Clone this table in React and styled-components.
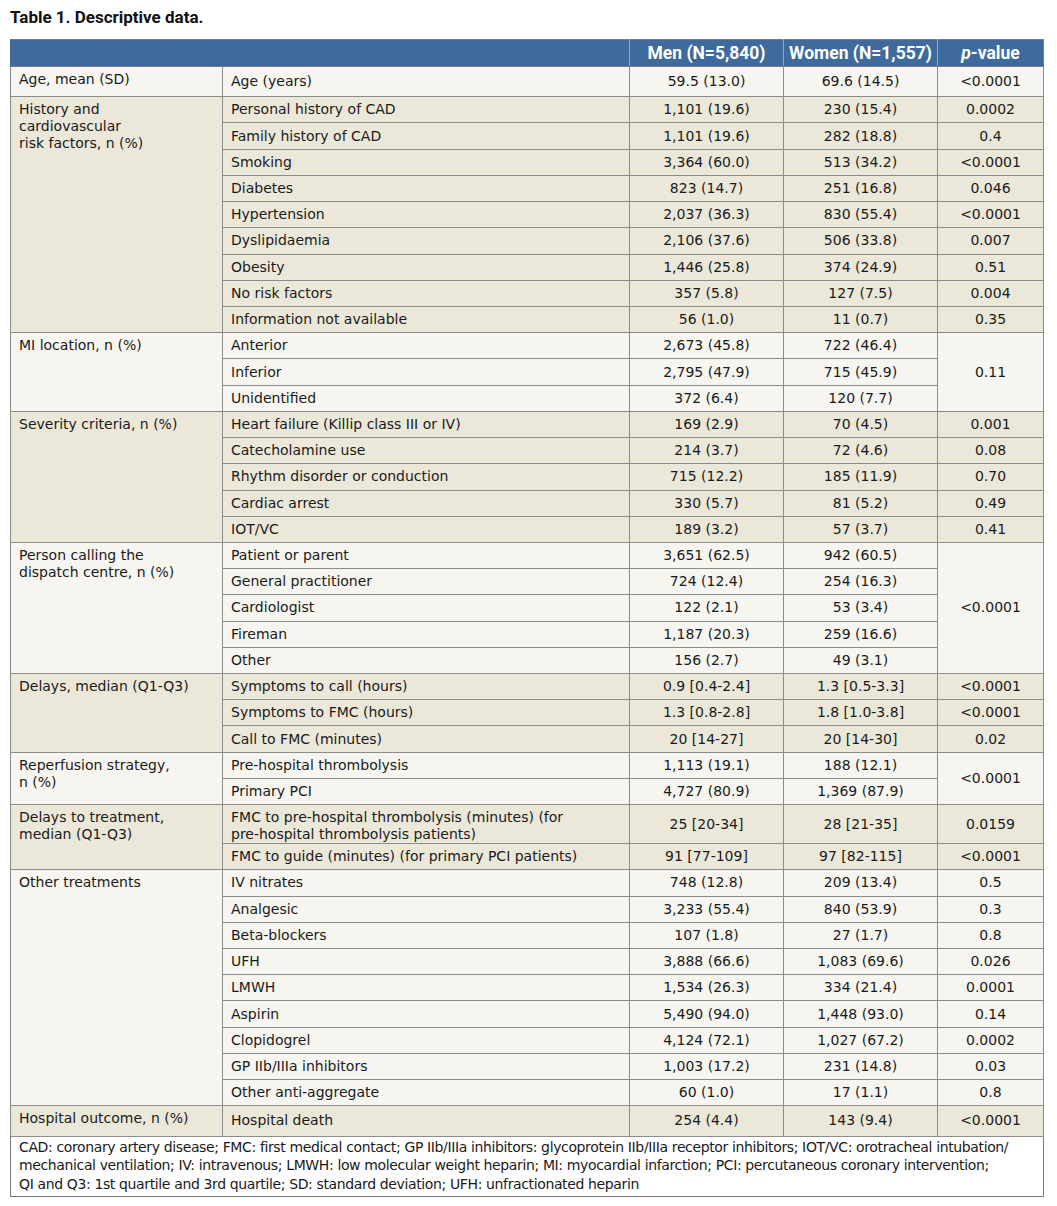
import React from 'react';
import styled, { createGlobalStyle } from 'styled-components';

const GlobalStyle = createGlobalStyle`
  body {
    margin: 0;
    background: #ffffff;
    font-family: "DejaVu Sans", "Liberation Sans", sans-serif;
    color: #1a1a1a;
  }
`;

const Page = styled.div`
  padding: 6px 14px 0 10px;
`;

const Title = styled.h1`
  margin: 0 0 10px 0;
  font-family: Roboto, "Liberation Sans", sans-serif;
  font-weight: bold;
  font-size: 17px;
  line-height: 23px;
  color: #111;
`;

const Table = styled.table`
  width: 1033px;
  border-collapse: collapse;
  table-layout: fixed;
  border: 1px solid #7a7a7a;
  font-size: 14px;
`;

const HeadCell = styled.th`
  background: #3e6b9c;
  color: #ffffff;
  height: 26px;
  padding: 0 2px;
  font-family: Roboto, "Liberation Sans", sans-serif;
  font-size: 17.5px;
  font-weight: bold;
  text-align: center;
  white-space: nowrap;
  border-left: 1px solid ${(p) => (p.$first ? '#3e6b9c' : '#8eabcb')};
  border-bottom: 1px solid #7a7a7a;
`;

const Row = styled.tr`
  background: ${(p) => (p.$dark ? '#ebe8d9' : '#f6f5ef')};
`;

const Cell = styled.td`
  border: 1px solid #8c8c8c;
  height: 25.22px;
  padding: 0 8px;
  line-height: 17px;
  text-align: ${(p) => (p.$center ? 'center' : 'left')};
  vertical-align: ${(p) => (p.$top ? 'top' : 'middle')};
  padding-top: ${(p) => (p.$top ? '4px' : '0')};
  white-space: nowrap;
`;

const Note = styled.td`
  background: #ffffff;
  border: 1px solid #7a7a7a;
  padding: 1px 8px 3px 8px;
  font-size: 14px;
  letter-spacing: -0.37px;
  line-height: 18.5px;
  white-space: nowrap;
`;

const groups = [
  {
    label: ['Age, mean (SD)'],
    rows: [['Age (years)', '59.5 (13.0)', '69.6 (14.5)', '<0.0001']],
  },
  {
    label: ['History and', 'cardiovascular', 'risk factors, n (%)'],
    rows: [
      ['Personal history of CAD', '1,101 (19.6)', '230 (15.4)', '0.0002'],
      ['Family history of CAD', '1,101 (19.6)', '282 (18.8)', '0.4'],
      ['Smoking', '3,364 (60.0)', '513 (34.2)', '<0.0001'],
      ['Diabetes', '823 (14.7)', '251 (16.8)', '0.046'],
      ['Hypertension', '2,037 (36.3)', '830 (55.4)', '<0.0001'],
      ['Dyslipidaemia', '2,106 (37.6)', '506 (33.8)', '0.007'],
      ['Obesity', '1,446 (25.8)', '374 (24.9)', '0.51'],
      ['No risk factors', '357 (5.8)', '127 (7.5)', '0.004'],
      ['Information not available', '56 (1.0)', '11 (0.7)', '0.35'],
    ],
  },
  {
    label: ['MI location, n (%)'],
    p: '0.11',
    rows: [
      ['Anterior', '2,673 (45.8)', '722 (46.4)'],
      ['Inferior', '2,795 (47.9)', '715 (45.9)'],
      ['Unidentified', '372 (6.4)', '120 (7.7)'],
    ],
  },
  {
    label: ['Severity criteria, n (%)'],
    rows: [
      ['Heart failure (Killip class III or IV)', '169 (2.9)', '70 (4.5)', '0.001'],
      ['Catecholamine use', '214 (3.7)', '72 (4.6)', '0.08'],
      ['Rhythm disorder or conduction', '715 (12.2)', '185 (11.9)', '0.70'],
      ['Cardiac arrest', '330 (5.7)', '81 (5.2)', '0.49'],
      ['IOT/VC', '189 (3.2)', '57 (3.7)', '0.41'],
    ],
  },
  {
    label: ['Person calling the', 'dispatch centre, n (%)'],
    p: '<0.0001',
    rows: [
      ['Patient or parent', '3,651 (62.5)', '942 (60.5)'],
      ['General practitioner', '724 (12.4)', '254 (16.3)'],
      ['Cardiologist', '122 (2.1)', '53 (3.4)'],
      ['Fireman', '1,187 (20.3)', '259 (16.6)'],
      ['Other', '156 (2.7)', '49 (3.1)'],
    ],
  },
  {
    label: ['Delays, median (Q1-Q3)'],
    rows: [
      ['Symptoms to call (hours)', '0.9 [0.4-2.4]', '1.3 [0.5-3.3]', '<0.0001'],
      ['Symptoms to FMC (hours)', '1.3 [0.8-2.8]', '1.8 [1.0-3.8]', '<0.0001'],
      ['Call to FMC (minutes)', '20 [14-27]', '20 [14-30]', '0.02'],
    ],
  },
  {
    label: ['Reperfusion strategy,', 'n (%)'],
    p: '<0.0001',
    rows: [
      ['Pre-hospital thrombolysis', '1,113 (19.1)', '188 (12.1)'],
      ['Primary PCI', '4,727 (80.9)', '1,369 (87.9)'],
    ],
  },
  {
    label: ['Delays to treatment,', 'median (Q1-Q3)'],
    rows: [
      [
        ['FMC to pre-hospital thrombolysis (minutes) (for', 'pre-hospital thrombolysis patients)'],
        '25 [20-34]',
        '28 [21-35]',
        '0.0159',
      ],
      ['FMC to guide (minutes) (for primary PCI patients)', '91 [77-109]', '97 [82-115]', '<0.0001'],
    ],
  },
  {
    label: ['Other treatments'],
    rows: [
      ['IV nitrates', '748 (12.8)', '209 (13.4)', '0.5'],
      ['Analgesic', '3,233 (55.4)', '840 (53.9)', '0.3'],
      ['Beta-blockers', '107 (1.8)', '27 (1.7)', '0.8'],
      ['UFH', '3,888 (66.6)', '1,083 (69.6)', '0.026'],
      ['LMWH', '1,534 (26.3)', '334 (21.4)', '0.0001'],
      ['Aspirin', '5,490 (94.0)', '1,448 (93.0)', '0.14'],
      ['Clopidogrel', '4,124 (72.1)', '1,027 (67.2)', '0.0002'],
      ['GP IIb/IIIa inhibitors', '1,003 (17.2)', '231 (14.8)', '0.03'],
      ['Other anti-aggregate', '60 (1.0)', '17 (1.1)', '0.8'],
    ],
  },
  {
    label: ['Hospital outcome, n (%)'],
    rows: [['Hospital death', '254 (4.4)', '143 (9.4)', '<0.0001']],
  },
];

const Lines = ({ lines }) =>
  lines.map((line, i) => (
    <React.Fragment key={i}>
      {i > 0 && <br />}
      {line}
    </React.Fragment>
  ));

const Group = ({ group, dark }) =>
  group.rows.map((row, i) => {
    const [label, men, women, p] = row;
    return (
      <Row key={i} $dark={dark}>
        {i === 0 && (
          <Cell rowSpan={group.rows.length} $top>
            <Lines lines={group.label} />
          </Cell>
        )}
        <Cell $top={Array.isArray(label)}>
          {Array.isArray(label) ? <Lines lines={label} /> : label}
        </Cell>
        <Cell $center>{men}</Cell>
        <Cell $center>{women}</Cell>
        {group.p
          ? i === 0 && (
              <Cell $center rowSpan={group.rows.length}>
                {group.p}
              </Cell>
            )
          : <Cell $center>{p}</Cell>}
      </Row>
    );
  });

export default function App() {
  return (
    <Page>
      <GlobalStyle />
      <Title>Table 1. Descriptive data.</Title>
      <Table>
        <colgroup>
          <col style={{ width: 212 }} />
          <col style={{ width: 407 }} />
          <col style={{ width: 154 }} />
          <col style={{ width: 154 }} />
          <col style={{ width: 106 }} />
        </colgroup>
        <thead>
          <tr>
            <HeadCell colSpan={2} $first />
            <HeadCell>Men (N=5,840)</HeadCell>
            <HeadCell>Women (N=1,557)</HeadCell>
            <HeadCell>
              <i>p</i>-value
            </HeadCell>
          </tr>
        </thead>
        <tbody>
          {groups.map((g, i) => (
            <Group key={i} group={g} dark={i % 2 === 1} />
          ))}
          <tr>
            <Note colSpan={5}>
              CAD: coronary artery disease; FMC: first medical contact; GP IIb/IIIa inhibitors: glycoprotein IIb/IIIa receptor inhibitors; IOT/VC: orotracheal intubation/
              <br />
              mechanical ventilation; IV: intravenous; LMWH: low molecular weight heparin; MI: myocardial infarction; PCI: percutaneous coronary intervention;
              <br />
              QI and Q3: 1st quartile and 3rd quartile; SD: standard deviation; UFH: unfractionated heparin
            </Note>
          </tr>
        </tbody>
      </Table>
    </Page>
  );
}
